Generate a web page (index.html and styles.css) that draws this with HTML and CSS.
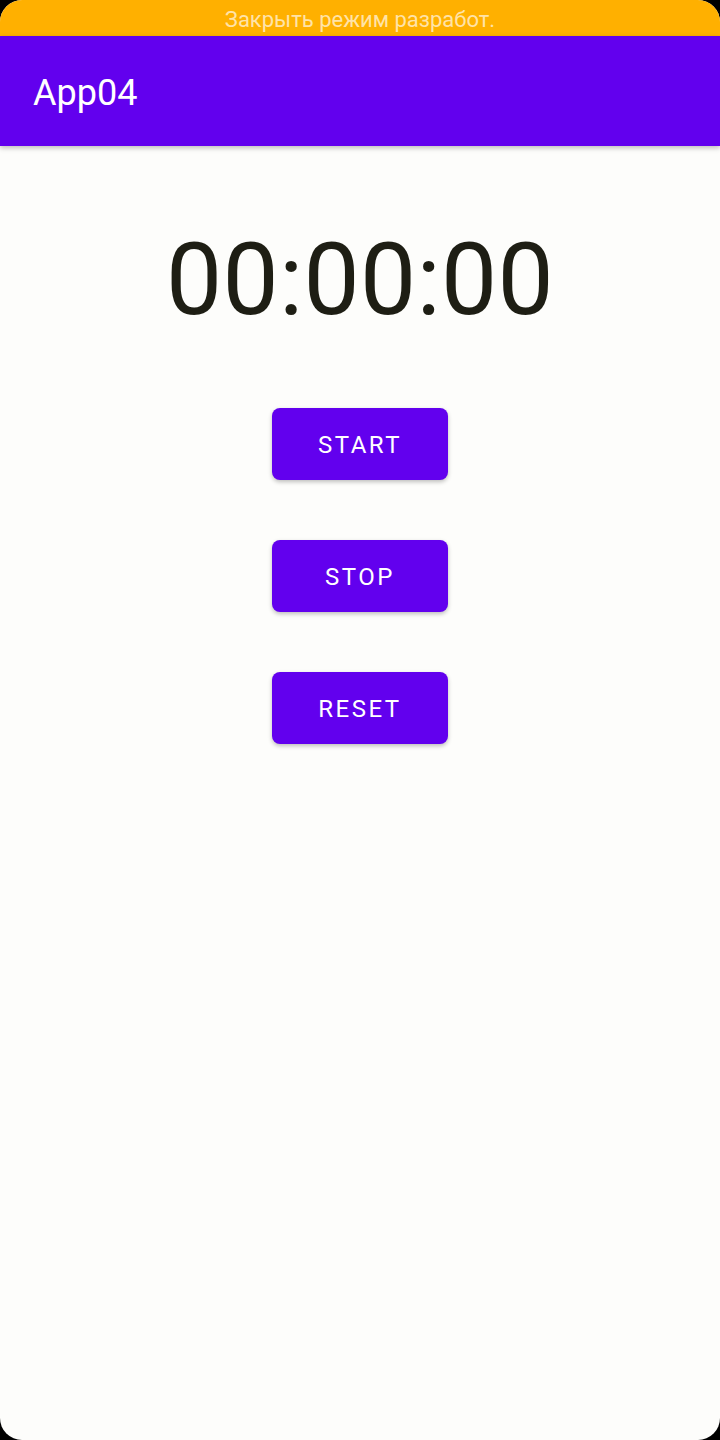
FILE: index.html
```html
<!DOCTYPE html>
<html lang="ru">
<head>
<meta charset="utf-8">
<title>App04</title>
<link rel="stylesheet" href="styles.css">
</head>
<body>
<div class="screen">
  <div class="status-bar">Закрыть режим разработ.</div>
  <header class="app-bar"><span class="app-title">App04</span></header>
  <main class="content">
    <div class="timer">00:00:00</div>
    <div class="buttons">
      <button class="btn">START</button>
      <button class="btn">STOP</button>
      <button class="btn">RESET</button>
    </div>
  </main>
</div>
</body>
</html>
```
FILE: styles.css
```css
html, body {
  margin: 0;
  padding: 0;
  background: #000;
}
body {
  width: 720px;
  height: 1440px;
  overflow: hidden;
  font-family: Roboto, "Noto Sans", sans-serif;
}
.screen {
  width: 720px;
  height: 1440px;
  background: #fdfdfb;
  border-radius: 22px;
  overflow: hidden;
  display: flex;
  flex-direction: column;
}
.status-bar {
  height: 36px;
  background: #ffb000;
  color: #ffe3a8;
  font-size: 22px;
  line-height: 40px;
  text-align: center;
}
.app-bar {
  height: 110px;
  background: #6200ee;
  display: flex;
  align-items: center;
  padding-left: 33px;
  box-shadow: 0 2px 5px rgba(0, 0, 0, 0.25);
  position: relative;
  z-index: 1;
}
.app-title {
  color: #fff;
  font-size: 36px;
  line-height: 1;
  margin-top: 4px;
}
.content {
  display: flex;
  flex-direction: column;
  align-items: center;
  padding-top: 84px;
}
.timer {
  font-size: 100px;
  line-height: 100px;
  color: #1e1e14;
  letter-spacing: 0.3px;
}
.buttons {
  display: flex;
  flex-direction: column;
  align-items: center;
  gap: 60px;
  margin-top: 78px;
}
.btn {
  width: 176px;
  height: 72px;
  border: none;
  border-radius: 8px;
  background: #6200ee;
  color: #fff;
  font-family: Roboto, "Noto Sans", sans-serif;
  font-weight: 400;
  font-size: 24px;
  letter-spacing: 2.5px;
  box-shadow: 0 2px 4px rgba(0, 0, 0, 0.25);
  padding: 2px 0 0;
}
```
